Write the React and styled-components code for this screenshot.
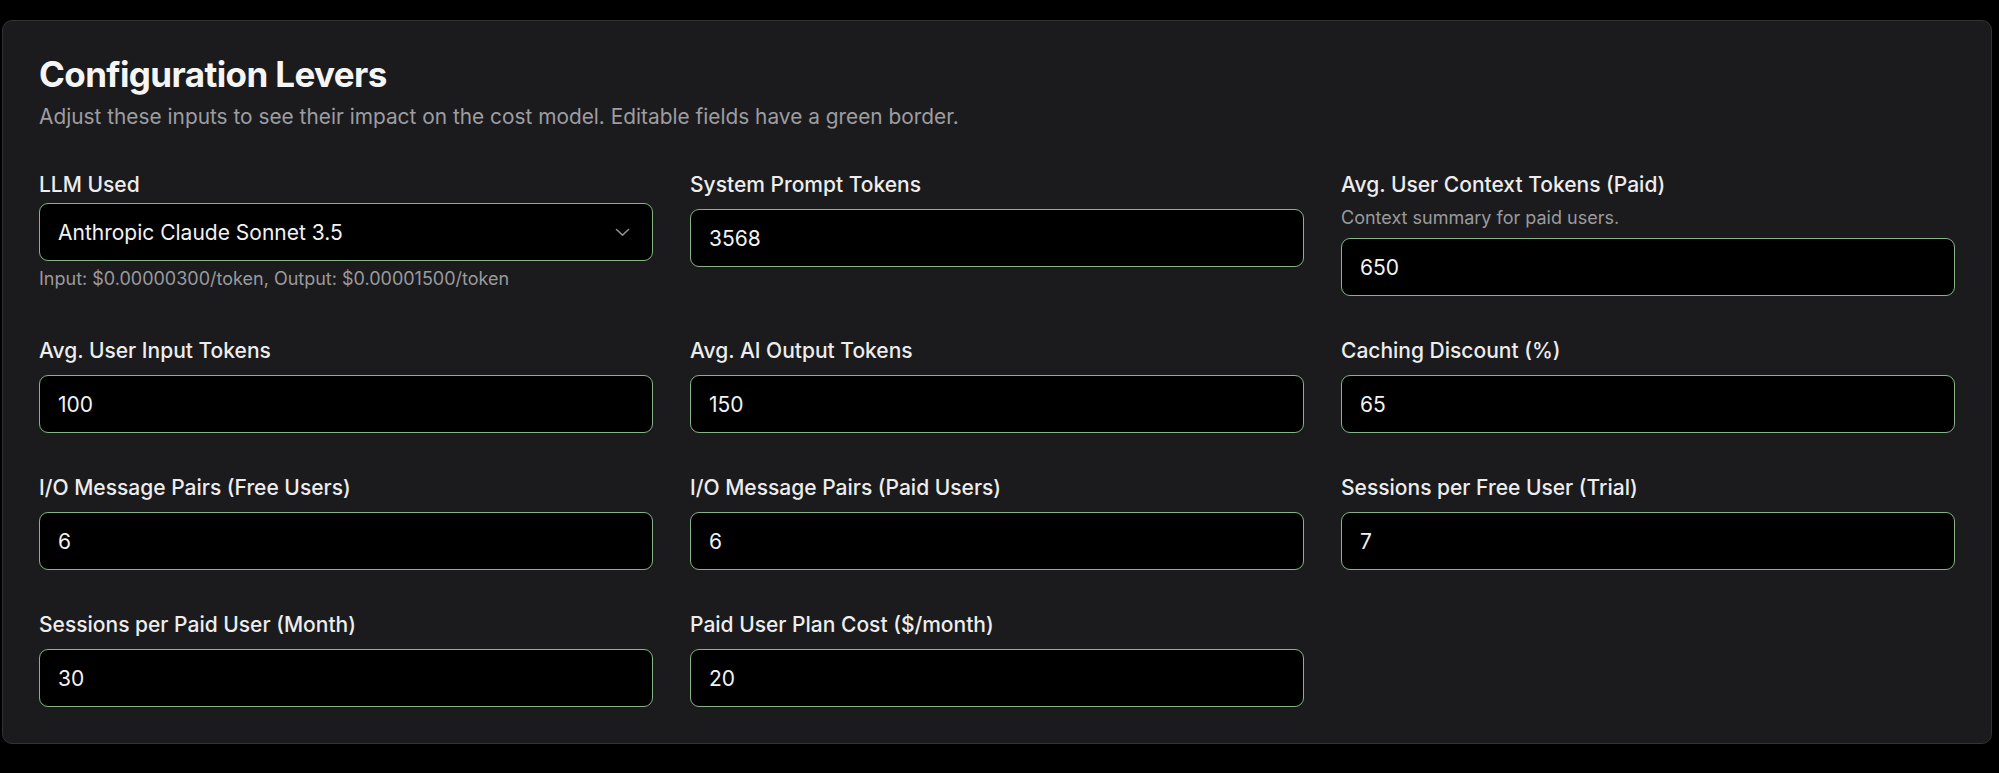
import styled, { createGlobalStyle } from "styled-components";

const GlobalStyle = createGlobalStyle`
    * {
        box-sizing: border-box;
    }
    body {
        margin: 0;
        background: #000;
        font-family: Inter, "Noto Sans", sans-serif;
        color: #f2f2f2;
    }
`;

const Card = styled.section`
    margin: 20px 7px 28px 2px;
    padding: 36px;
    background: #1b1b1d;
    border: 1px solid #333336;
    border-radius: 10px;
`;

const Title = styled.h2`
    margin: 0;
    font-size: 35px;
    line-height: 34px;
    font-weight: 700;
    letter-spacing: -0.6px;
    color: #f5f5f5;
`;

const Subtitle = styled.p`
    margin: 12px 0 0;
    font-size: 20.85px;
    line-height: 28px;
    color: #9d9da2;
`;

const Grid = styled.div`
    margin-top: 40px;
    display: grid;
    grid-template-columns: repeat(3, 1fr);
    column-gap: 37px;
    row-gap: 41px;
`;

const Field = styled.div`
    display: flex;
    flex-direction: column;
`;

const Label = styled.label`
    font-size: 21px;
    line-height: 28px;
    font-weight: 500;
    color: #ededed;
`;

const Hint = styled.div`
    margin-top: ${(p) => p.$gap || 0}px;
    font-size: 18px;
    line-height: 24px;
    color: #9a9a9e;
`;

const Input = styled.input`
    margin-top: ${(p) => p.$gap}px;
    width: 100%;
    height: 58px;
    padding: 0 18px;
    background: #000;
    border: 1.5px solid #86b486;
    border-radius: 9px;
    font: inherit;
    font-size: 21px;
    color: #f2f2f2;
    outline: none;
`;

const Select = styled.div`
    margin-top: 4px;
    height: 58px;
    padding: 0 22px 0 18px;
    display: flex;
    align-items: center;
    justify-content: space-between;
    background: #000;
    border: 1.5px solid #86b486;
    border-radius: 9px;
    font-size: 21px;
    color: #f2f2f2;
    cursor: pointer;
`;

const Chevron = () => (
    <svg width="15" height="9" viewBox="0 0 15 9" fill="none">
        <polyline
            points="1.5,1.5 7.5,7.2 13.5,1.5"
            stroke="#8c8c90"
            strokeWidth="1.6"
            strokeLinecap="round"
            strokeLinejoin="round"
        />
    </svg>
);

const fields = [
    { label: "System Prompt Tokens", value: "3568" },
    {
        label: "Avg. User Context Tokens (Paid)",
        hint: "Context summary for paid users.",
        value: "650",
    },
    { label: "Avg. User Input Tokens", value: "100" },
    { label: "Avg. AI Output Tokens", value: "150" },
    { label: "Caching Discount (%)", value: "65" },
    { label: "I/O Message Pairs (Free Users)", value: "6" },
    { label: "I/O Message Pairs (Paid Users)", value: "6" },
    { label: "Sessions per Free User (Trial)", value: "7" },
    { label: "Sessions per Paid User (Month)", value: "30" },
    { label: "Paid User Plan Cost ($/month)", value: "20" },
];

const App = () => {
    return (
        <>
            <GlobalStyle />
            <Card>
                <Title>Configuration Levers</Title>
                <Subtitle>
                    Adjust these inputs to see their impact on the cost model.
                    Editable fields have a green border.
                </Subtitle>
                <Grid>
                    <Field>
                        <Label>LLM Used</Label>
                        <Select role="combobox">
                            <span>Anthropic Claude Sonnet 3.5</span>
                            <Chevron />
                        </Select>
                        <Hint $gap={6}>
                            Input: $0.00000300/token, Output: $0.00001500/token
                        </Hint>
                    </Field>
                    {fields.map((f) => (
                        <Field key={f.label}>
                            <Label>{f.label}</Label>
                            {f.hint && <Hint $gap={7}>{f.hint}</Hint>}
                            <Input
                                $gap={f.hint ? 8 : 10}
                                defaultValue={f.value}
                            />
                        </Field>
                    ))}
                </Grid>
            </Card>
        </>
    );
};

export default App;
